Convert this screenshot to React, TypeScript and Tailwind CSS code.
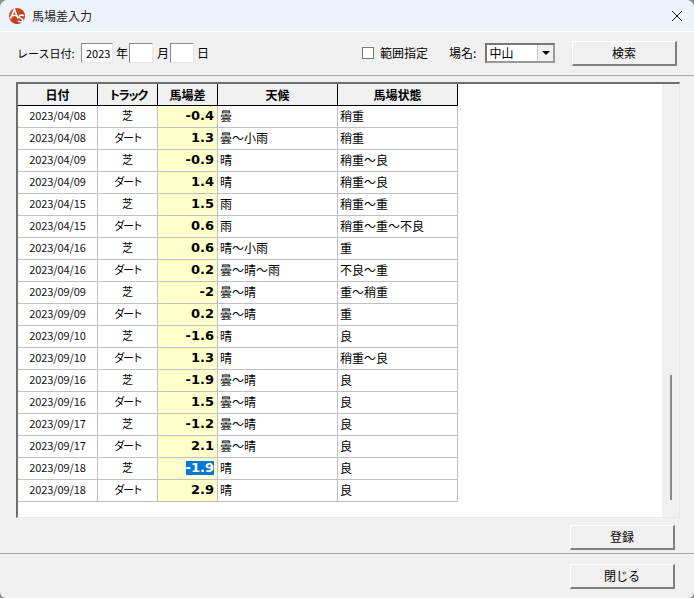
const rows = [
  ["2023/04/08", "芝", "-0.4", "曇", "稍重"],
  ["2023/04/08", "ダート", "1.3", "曇〜小雨", "稍重"],
  ["2023/04/09", "芝", "-0.9", "晴", "稍重〜良"],
  ["2023/04/09", "ダート", "1.4", "晴", "稍重〜良"],
  ["2023/04/15", "芝", "1.5", "雨", "稍重〜重"],
  ["2023/04/15", "ダート", "0.6", "雨", "稍重〜重〜不良"],
  ["2023/04/16", "芝", "0.6", "晴〜小雨", "重"],
  ["2023/04/16", "ダート", "0.2", "曇〜晴〜雨", "不良〜重"],
  ["2023/09/09", "芝", "-2", "曇〜晴", "重〜稍重"],
  ["2023/09/09", "ダート", "0.2", "曇〜晴", "重"],
  ["2023/09/10", "芝", "-1.6", "晴", "良"],
  ["2023/09/10", "ダート", "1.3", "晴", "稍重〜良"],
  ["2023/09/16", "芝", "-1.9", "曇〜晴", "良"],
  ["2023/09/16", "ダート", "1.5", "曇〜晴", "良"],
  ["2023/09/17", "芝", "-1.2", "曇〜晴", "良"],
  ["2023/09/17", "ダート", "2.1", "曇〜晴", "良"],
  ["2023/09/18", "芝", "-1.9", "晴", "良"],
  ["2023/09/18", "ダート", "2.9", "晴", "良"],
];

const headers = ["日付", "トラック", "馬場差", "天候", "馬場状態"];
const widths = ["w-[80px]", "w-[60px]", "w-[60px]", "w-[120px]", "w-[120px]"];

const Btn = ({ label, cls }: { label: string; cls: string }) => (
  <button className={`h-[25px] w-[105px] bg-[#f0f0f0] border border-t-white border-l-white border-r-[#808080] border-b-[#808080] border-r-2 border-b-2 text-[12px] text-black ${cls}`}>
    {label}
  </button>
);

const DateBox = ({ value, w }: { value?: string; w: string }) => (
  <div className={`h-[20px] ${w} bg-white border border-t-[#8a8a8a] border-l-[#8a8a8a] border-r-[#e8e8e8] border-b-[#e8e8e8] text-[11px] leading-[18px] pl-[4px]`}>
    {value}
  </div>
);

export default function App() {
  return (
    <div className="w-[694px] h-[598px] overflow-hidden bg-[#8c8c8c]" style={{ fontFamily: '"Noto Sans CJK JP", "Liberation Sans", sans-serif' }}>
      <div className="w-full h-full flex flex-col rounded-t-[8px] rounded-b-[6px] overflow-hidden bg-[#f0f0f0] text-[12px] text-black">
        {/* title bar */}
        <div className="h-[32px] shrink-0 bg-[#eef2fa] border-b border-white flex items-center pl-[9px] pr-[11px]">
          <svg width="16" height="16" viewBox="0 0 16 16">
            <defs>
              <linearGradient id="logo" x1="0" y1="0" x2="1" y2="1">
                <stop offset="0" stopColor="#e8541c" />
                <stop offset="1" stopColor="#a8301a" />
              </linearGradient>
            </defs>
            <circle cx="8" cy="8" r="8" fill="url(#logo)" />
            <path d="M1.5 10.5 L5.5 1.5 L9 10.5 M3 7.5 H7.8" fill="none" stroke="#fff" strokeWidth="1.7" />
            <path d="M15 8 C13.5 6.6 10 7 10.2 9 C10.4 10.8 14 10.3 13.9 12.2 C13.8 14 10.4 14.2 8.8 12.8" fill="none" stroke="#fff" strokeWidth="1.6" />
          </svg>
          <span className="ml-[7px] text-[12px] text-[#222]">馬場差入力</span>
          <svg className="ml-auto" width="12" height="12" viewBox="0 0 12 12">
            <path d="M1 1 L11 11 M11 1 L1 11" stroke="#222" strokeWidth="1" fill="none" />
          </svg>
        </div>

        {/* search row */}
        <div className="h-[44px] shrink-0 border-b border-[#a8a8a8] flex items-center pl-[17px] pr-[17px] pb-[1px]">
          <span className="w-[64px] text-[11px]">レース日付:</span>
          <DateBox value="2023" w="w-[32px]" />
          <span className="ml-[3px] mr-[1px]">年</span>
          <DateBox w="w-[24px]" />
          <span className="ml-[4px] mr-[1px]">月</span>
          <DateBox w="w-[24px]" />
          <span className="ml-[3px]">日</span>
          <div className="ml-[153px] w-[12px] h-[12px] bg-white border border-[#777]" />
          <span className="ml-[6px]">範囲指定</span>
          <span className="ml-[21px]">場名:</span>
          <div className="ml-[9px] w-[70px] h-[20px] bg-white border-2 border-t-[#777] border-l-[#777] border-r-[#999] border-b-[#999] flex items-center justify-between pl-[2px]">
            <span className="text-[12px]">中山</span>
            <div className="w-[16px] h-[16px] bg-[#f0f0f0] border-l border-[#ccc] flex items-center justify-center">
              <div className="w-0 h-0 border-x-[4px] border-x-transparent border-t-[4px] border-t-black" />
            </div>
          </div>
          <Btn label="検索" cls="ml-auto" />
        </div>

        {/* grid */}
        <div className="ml-[16px] mt-[6px] w-[664px] h-[436px] shrink-0 flex bg-white border-t-2 border-l-2 border-[#6e6e6e] border-r border-b border-r-[#e8e8e8] border-b-[#e8e8e8]">
          <div className="flex-1 min-w-0">
            <div className="flex h-[22px]">
              {headers.map((h, i) => (
                <div key={h} className={`${widths[i]} bg-[#f0f0f0] border-r border-b border-black flex items-center justify-center font-bold text-[12px] ${h === "トラック" ? "tracking-[-2.5px]" : ""}`}>
                  {h}
                </div>
              ))}
            </div>
            {rows.map((r, idx) => (
              <div key={idx} className="flex h-[22px]">
                <div className="w-[80px] pb-[2px] border-r border-b border-[#c0c0c0] flex items-center justify-center text-[11px] tracking-[-0.1px] text-[#111]">{r[0]}</div>
                <div className={`w-[60px] pb-[2px] border-r border-b border-[#c0c0c0] flex items-center justify-center text-[11px] ${r[1] === "ダート" ? "tracking-[-2px]" : ""}`}>{r[1]}</div>
                <div className="w-[60px] pb-[1px] bg-[#ffffcc] border-r border-b border-[#c0c0c0] flex items-center justify-end pr-[3px] font-bold text-[13px]" style={{ fontFamily: '"DejaVu Sans", sans-serif' }}>
                  {idx === 16 ? <span className="bg-[#0078d7] text-white leading-[14px]">{r[2]}</span> : r[2]}
                </div>
                <div className="w-[120px] pb-[2px] border-r border-b border-[#c0c0c0] flex items-center pl-[2px] text-[12px]">{r[3]}</div>
                <div className="w-[120px] pb-[2px] border-r border-b border-[#c0c0c0] flex items-center pl-[2px] text-[12px]">{r[4]}</div>
              </div>
            ))}
          </div>
          {/* scrollbar */}
          <div className="w-[17px] bg-[#f0f0f0] flex justify-center items-start pt-[291px]">
            <div className="w-[2px] h-[125px] bg-[#8a8a8a]" />
          </div>
        </div>

        <div className="flex justify-end pr-[19px] pt-[7px] pb-[3px]">
          <Btn label="登録" cls="" />
        </div>
        <div className="border-t border-[#a8a8a8] flex justify-end pr-[19px] pt-[10px]">
          <Btn label="閉じる" cls="" />
        </div>
      </div>
    </div>
  );
}
